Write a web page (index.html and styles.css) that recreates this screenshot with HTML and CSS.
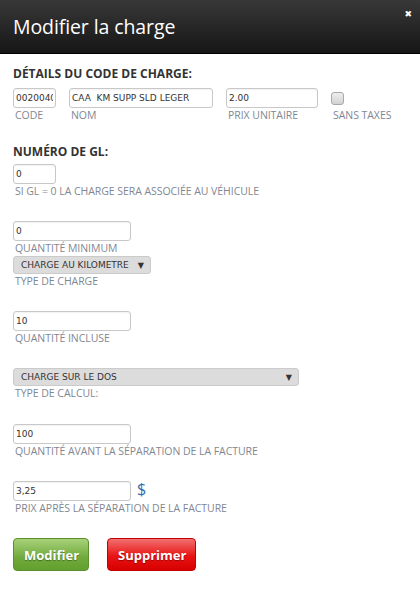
FILE: index.html
```html
<!DOCTYPE html>
<html lang="fr">
<head>
<meta charset="utf-8">
<title>Modifier la charge</title>
<link rel="stylesheet" href="styles.css">
</head>
<body>
<div class="dialog">
  <div class="header">
    <h1 class="title">Modifier la charge</h1>
    <span class="close">&#x2716;</span>
  </div>
  <div class="content">
    <h2 class="section-title">DÉTAILS DU CODE DE CHARGE:</h2>
    <div class="row">
      <div class="field">
        <input class="input w-code" type="text" value="0020040">
        <label class="label">CODE</label>
      </div>
      <div class="field">
        <input class="input w-name" type="text" value="CAA  KM SUPP SLD LEGER">
        <label class="label">NOM</label>
      </div>
      <div class="field">
        <input class="input w-price" type="text" value="2.00">
        <label class="label">PRIX UNITAIRE</label>
      </div>
      <div class="field field-check">
        <span class="checkbox"></span>
        <label class="label">SANS TAXES</label>
      </div>
    </div>

    <h2 class="section-title gl-title">NUMÉRO DE GL:</h2>
    <div class="field gl-field">
      <input class="input w-code" type="text" value="0">
      <label class="label">SI GL = 0 LA CHARGE SERA ASSOCIÉE AU VÉHICULE</label>
    </div>

    <div class="field min-field">
      <input class="input w-std" type="text" value="0">
      <label class="label">QUANTITÉ MINIMUM</label>
    </div>

    <div class="field type-field">
      <div class="select w-sel1"><span>CHARGE AU KILOMETRE</span><span class="arrow">&#9660;</span></div>
      <label class="label">TYPE DE CHARGE</label>
    </div>

    <div class="field incl-field">
      <input class="input w-std" type="text" value="10">
      <label class="label">QUANTITÉ INCLUSE</label>
    </div>

    <div class="field calc-field">
      <div class="select w-sel2"><span>CHARGE SUR LE DOS</span><span class="arrow">&#9660;</span></div>
      <label class="label">TYPE DE CALCUL:</label>
    </div>

    <div class="field before-field">
      <input class="input w-std" type="text" value="100">
      <label class="label">QUANTITÉ AVANT LA SÉPARATION DE LA FACTURE</label>
    </div>

    <div class="field after-field">
      <div class="inline">
        <input class="input w-std" type="text" value="3,25">
        <span class="currency">$</span>
      </div>
      <label class="label">PRIX APRÈS LA SÉPARATION DE LA FACTURE</label>
    </div>

    <div class="buttons">
      <button class="btn btn-green">Modifier</button>
      <button class="btn btn-red">Supprimer</button>
    </div>
  </div>
</div>
</body>
</html>
```

FILE: styles.css
```css
* { box-sizing: border-box; }
html, body { margin: 0; padding: 0; background: #fff; }
body { font-family: "Liberation Sans", Arial, sans-serif; }

.dialog { width: 420px; height: 611px; background: #fff; }

.header {
  height: 54px;
  background: linear-gradient(#383838, #161616);
  display: flex;
  align-items: center;
  justify-content: space-between;
  padding: 0 8px 0 13px;
  border-bottom: 1px solid #000;
}
.title {
  margin: 0;
  color: #fff;
  font-family: "Open Sans", sans-serif;
  font-weight: normal;
  font-size: 19.5px;
  letter-spacing: -0.1px;
}
.close {
  align-self: flex-start;
  margin-top: 9px;
  color: #fff;
  font-size: 9px;
  font-family: "DejaVu Sans", sans-serif;
}

.content { padding: 12px 13px 0; }

.section-title {
  margin: 0 0 6px;
  font-size: 12px;
  font-weight: bold;
  color: #333;
  font-family: "Open Sans", sans-serif;
  line-height: 16px;
}
.gl-title { margin-top: 22px; margin-bottom: 4px; }

.row { display: flex; gap: 13px; }

.field { display: flex; flex-direction: column; align-items: flex-start; }

.input {
  height: 20px;
  border: 1px solid #c8c8c8;
  border-radius: 3px;
  padding: 0 2px;
  font-family: "DejaVu Sans", Verdana, sans-serif;
  font-size: 9px;
  color: #333;
  background: #fff;
  box-shadow: inset 0 1px 2px rgba(0,0,0,0.06);
  outline: none;
  margin: 0;
}
.w-code { width: 43px; }
.w-name { width: 144px; }
.w-price { width: 92px; }
.w-std { width: 118px; }

.checkbox {
  display: block;
  width: 13px;
  height: 13px;
  margin: 4px 0 3px 0;
  border: 1px solid #a8a8a8;
  border-radius: 3px;
  background: linear-gradient(#eee, #d2d2d2);
}

.label {
  font-family: "Open Sans", sans-serif;
  font-size: 10.5px;
  letter-spacing: -0.05px;
  color: #7f8791;
  line-height: 13px;
  margin-top: 1px;
  padding-left: 2px;
  white-space: nowrap;
}

.min-field { margin-top: 23px; }
.type-field { margin-top: 1px; }
.incl-field { margin-top: 23px; }
.calc-field { margin-top: 23px; }
.before-field { margin-top: 24px; }
.after-field { margin-top: 23px; }

.select {
  height: 18px;
  display: flex;
  align-items: center;
  justify-content: space-between;
  padding: 0 6px 0 7px;
  background: #dcdcdc;
  border: 1px solid #cbcbcb;
  border-radius: 3px;
  font-family: "DejaVu Sans", Verdana, sans-serif;
  font-size: 9px;
  color: #333;
}
.select .arrow { font-size: 8px; color: #333; }
.w-sel1 { width: 138px; }
.w-sel2 { width: 286px; }

.inline { display: flex; align-items: center; gap: 6px; }
.currency {
  font-family: "Open Sans", sans-serif;
  font-size: 16px;
  color: #2f6ea8;
  line-height: 16px;
  margin-top: -4px;
}

.buttons { display: flex; gap: 18px; margin-top: 23px; }
.btn {
  height: 33px;
  border-radius: 4px;
  font-family: "Open Sans", sans-serif;
  font-size: 13px;
  font-weight: bold;
  color: #fff;
  text-shadow: 0 1px 1px rgba(0,0,0,0.35);
  padding: 0 10px;
  cursor: pointer;
}
.btn-green {
  width: 76px;
  background: linear-gradient(#a7d17a, #71aa3c 60%, #62a02f);
  border: 1px solid #5b8f2b;
}
.btn-red {
  width: 89px;
  background: linear-gradient(#f27070, #e81414 55%, #d80000);
  border: 1px solid #c40000;
}
```
